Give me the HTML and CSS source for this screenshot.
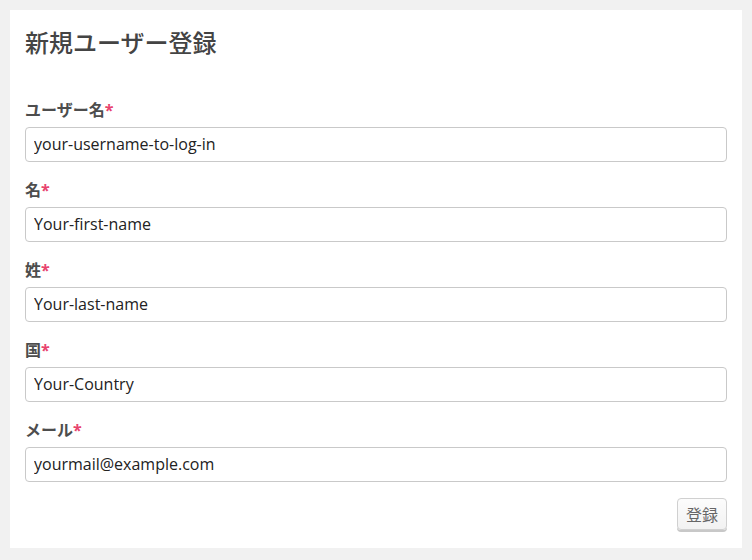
FILE: index.html
```html
<!doctype html>
<html lang="ja">
<head>
	<meta charset="UTF-8">
	<title>新規ユーザー登録</title>
	<link rel="stylesheet" href="styles.css">
</head>
<body>

	<div class="panel">
		<h1 class="panelTitle">新規ユーザー登録</h1>

		<form class="signupForm" action="#" method="get">
			<div class="field">
				<label for="usernameID">ユーザー名<span class="req">*</span></label>
				<input type="text" id="usernameID" value="your-username-to-log-in">
			</div>
			<div class="field">
				<label for="firstID">名<span class="req">*</span></label>
				<input type="text" id="firstID" value="Your-first-name">
			</div>
			<div class="field">
				<label for="lastID">姓<span class="req">*</span></label>
				<input type="text" id="lastID" value="Your-last-name">
			</div>
			<div class="field">
				<label for="countryID">国<span class="req">*</span></label>
				<input type="text" id="countryID" value="Your-Country">
			</div>
			<div class="field">
				<label for="emailID">メール<span class="req">*</span></label>
				<input type="text" id="emailID" value="yourmail@example.com">
			</div>
			<div class="actions">
				<button type="submit" class="submitBtn">登録</button>
			</div>
		</form>
	</div>

</body>
</html>
```

FILE: styles.css
```css
html, body {
	margin: 0;
	padding: 0;
}
body {
	background-color: #f1f1f1;
	padding: 10px;
	font-family: "Open Sans", "Noto Sans CJK JP", sans-serif;
	color: #444;
}

.panel {
	background-color: #ffffff;
	padding: 18px 15px 18px 15px;
}

.panelTitle {
	margin: 0;
	font-size: 24px;
	line-height: 30px;
	font-weight: 500;
	color: #444;
}

.signupForm {
	margin-top: 42px;
}

.field {
	margin-bottom: 18px;
}
.field label {
	display: block;
	font-size: 16px;
	line-height: 20px;
	font-weight: bold;
	color: #4d4d4d;
	margin-bottom: 7px;
}
.req {
	color: #e8436d;
}

.field input[type=text] {
	display: block;
	box-sizing: border-box;
	width: 100%;
	height: 35px;
	margin: 0;
	padding: 0 8px 2px 8px;
	border: 1px solid #c9c9c9;
	border-radius: 4px;
	font-family: inherit;
	font-size: 16px;
	color: #222;
	background: #fff;
}

/* submit button sits flush right under the last input */
.actions {
	display: flex;
	justify-content: flex-end;
	margin-top: -2px;
}
.submitBtn {
	box-sizing: border-box;
	height: 32px;
	padding: 0 8px;
	border: 1px solid #d0d0d0;
	border-radius: 4px;
	background: linear-gradient(#fcfcfc, #f2f2f2);
	box-shadow: 0 2px 0 #c8c8c8;
	font-family: inherit;
	font-size: 16px;
	color: #666;
}
```
